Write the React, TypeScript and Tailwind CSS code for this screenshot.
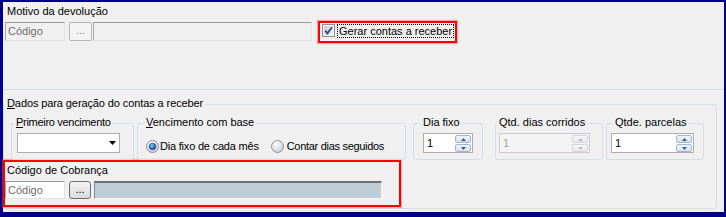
import React from "react";

function GroupBox({
  label,
  className,
  labelClass,
  children,
}: {
  label: React.ReactNode;
  className: string;
  labelClass: string;
  children?: React.ReactNode;
}) {
  return (
    <div className={`rounded-[3px] border border-[#d5dfe5] ${className}`}>
      <div className={`-mt-[8px] h-[13px] w-fit bg-[#f0f0f0] px-[2px] leading-[13px] ${labelClass}`}>
        {label}
      </div>
      {children}
    </div>
  );
}

function Arrow({ up, disabled }: { up?: boolean; disabled?: boolean }) {
  const fill = disabled ? "#b8bcc2" : "#3d5a8a";
  return (
    <div
      className={`flex h-[9px] items-center justify-center rounded-[2px] border ${
        disabled
          ? "border-[#d2d5d9] bg-[linear-gradient(#f7f7f7,#e8e9eb)]"
          : "border-[#a7b5c8] bg-[linear-gradient(#f1f5fa,#d7e1ec)]"
      }`}
    >
      <svg width="5" height="3" viewBox="0 0 5 3">
        <path d={up ? "M0 3 L2.5 0 L5 3 Z" : "M0 0 L2.5 3 L5 0 Z"} fill={fill} />
      </svg>
    </div>
  );
}

function Spin({ className, disabled }: { className: string; disabled?: boolean }) {
  return (
    <div
      className={`flex h-[20px] border ${
        disabled ? "border-[#c9ccd1] bg-[#f4f4f4] text-[#a3a3a3]" : "border-[#abadb3] bg-white text-black"
      } ${className}`}
    >
      <div className="flex-1 pl-[3px] leading-[18px]">1</div>
      <div className="mr-px mt-px flex w-[16px] flex-col gap-px">
        <Arrow up disabled={disabled} />
        <Arrow disabled={disabled} />
      </div>
    </div>
  );
}

function Radio({ checked }: { checked?: boolean }) {
  return (
    <svg width="13" height="13" viewBox="0 0 13 13" className="shrink-0">
      <defs>
        <radialGradient id="rOff" cx="0.35" cy="0.3" r="0.8">
          <stop offset="0" stopColor="#ffffff" />
          <stop offset="1" stopColor="#c6c8cc" />
        </radialGradient>
        <radialGradient id="rOn" cx="0.4" cy="0.35" r="0.7">
          <stop offset="0" stopColor="#9fd3ff" />
          <stop offset="0.6" stopColor="#2b72d0" />
          <stop offset="1" stopColor="#16448f" />
        </radialGradient>
      </defs>
      <circle cx="6.5" cy="6.5" r="6" fill="url(#rOff)" stroke="#8e9196" />
      {checked && <circle cx="6.5" cy="6.5" r="3.3" fill="url(#rOn)" stroke="#1d3f7a" strokeWidth="0.6" />}
    </svg>
  );
}

function CheckBox() {
  return (
    <svg width="13" height="13" viewBox="0 0 13 13" className="shrink-0">
      <defs>
        <linearGradient id="cb" x1="0" y1="0" x2="1" y2="1">
          <stop offset="0" stopColor="#c9ccd2" />
          <stop offset="1" stopColor="#eff1f4" />
        </linearGradient>
      </defs>
      <rect x="0.5" y="0.5" width="12" height="12" fill="#f5f5f5" stroke="#8e8f8f" />
      <rect x="2" y="2" width="9" height="9" fill="url(#cb)" />
      <path d="M3.2 6.6 L5.4 9.4 L10 3.2" fill="none" stroke="#2d4c9c" strokeWidth="1.8" />
    </svg>
  );
}

const inset = "border border-t-[#9a9a9a] border-l-[#a8a8a8] border-r-[#e3e3e3] border-b-[#e3e3e3]";

export default function App() {
  return (
    <div className="h-[217px] w-[726px] bg-[#000088] pb-[5px] pl-[3px] pr-[2px] pt-[2px] font-['Liberation_Sans',Arial,sans-serif] text-[11px] text-black">
      <div className="h-[210px] w-[721px] bg-[#f0f0f0]">
        {/* Motivo da devolução */}
        <div className="h-[87px] pt-[3px]">
          <div className="h-[13px] pl-[4px] leading-[13px]">Motivo da devolução</div>
          <div className="mt-[4px] flex h-[19px] items-start pl-[2px]">
            <div className={`h-[19px] w-[60px] bg-[#f0f0f0] pl-[2px] leading-[17px] text-[#6d6d6d] ${inset}`}>Código</div>
            <div className="ml-[4px] flex h-[19px] w-[23px] items-center justify-center rounded-[2px] border border-[#b5b5b5] bg-[#f4f4f4] pb-[2px] text-[#8a8a8a]">
              ...
            </div>
            <div className={`ml-[1px] h-[19px] w-[219px] bg-[#f0f0f0] ${inset}`} />
            <div className="-mt-[1px] ml-[6px] flex h-[22px] w-[139px] items-start border-2 border-[#ff0000] pl-[2px] pt-px shadow-[0_0_1px_1px_rgba(255,80,80,0.45)]">
              <CheckBox />
              <span className="ml-[2px] h-[14px] border border-dotted border-black px-px leading-[12px]">
                Gerar contas a receber
              </span>
            </div>
          </div>
        </div>
        <div className="h-px bg-[#d5dde4]" />

        {/* Dados para geração do contas a receber */}
        <GroupBox
          className="mt-[14px] h-[105px] w-[714px]"
          labelClass="ml-[1px] tracking-[-0.1px]"
          label={
            <>
              <span className="underline">D</span>ados para geração do contas a receber
            </>
          }
        >
          <div className="mt-[13px] flex items-start">
            <GroupBox
              className="ml-[7px] h-[37px] w-[123px]"
              labelClass="ml-[2px] tracking-[-0.3px]"
              label={
                <>
                  <span className="underline">P</span>rimeiro vencimento
                </>
              }
            >
              <div className="ml-[5px] mt-[4px] flex h-[20px] w-[103px] items-center justify-end border border-[#abadb3] bg-white pr-[3px]">
                <svg width="7" height="4" viewBox="0 0 7 4">
                  <path d="M0 0 L7 0 L3.5 4 Z" fill="#000" />
                </svg>
              </div>
            </GroupBox>

            <GroupBox
              className="ml-[3px] h-[37px] w-[269px]"
              labelClass="ml-[6px]"
              label={
                <>
                  <span className="underline">V</span>encimento com base
                </>
              }
            >
              <div className="ml-[8px] mt-[11px] flex h-[13px] items-center">
                <Radio checked />
                <span className="ml-[1px] leading-[13px] tracking-[-0.2px]">Dia fixo de cada mês</span>
                <div className="ml-[12px]">
                  <Radio />
                </div>
                <span className="ml-[3px] leading-[13px] tracking-[-0.3px]">Contar dias seguidos</span>
              </div>
            </GroupBox>

            <GroupBox className="ml-[7px] h-[37px] w-[70px]" labelClass="ml-[7px]" label="Dia fixo">
              <Spin className="ml-[9px] mt-[4px] w-[50px]" />
            </GroupBox>

            <GroupBox className="ml-[12px] h-[37px] w-[108px]" labelClass="ml-[1px]" label="Qtd. dias corridos">
              <Spin className="ml-[3px] mt-[4px] w-[91px]" disabled />
            </GroupBox>

            <GroupBox className="ml-[3px] h-[37px] w-[98px]" labelClass="ml-[6px]" label="Qtde. parcelas">
              <Spin className="ml-[4px] mt-[4px] w-[83px]" />
            </GroupBox>
          </div>

          {/* Código de Cobrança */}
          <div className="-ml-[1px] h-[47px] w-[398px] border-2 border-[#ff0000] pl-[2px] shadow-[0_0_1px_1px_rgba(255,80,80,0.45)]">
            <div className="mt-[2px] h-[13px] leading-[13px]">Código de Cobrança</div>
            <div className="-ml-[2px] mt-[4px] flex h-[18px] items-start">
              <div className={`h-[18px] w-[60px] bg-white pl-[2px] leading-[16px] text-[#6d6d6d] ${inset}`}>Código</div>
              <div className="ml-[4px] flex h-[18px] w-[22px] items-center justify-center rounded-[3px] border border-[#707070] bg-[linear-gradient(#f2f2f2,#dadada)] pb-[2px]">
                ...
              </div>
              <div className="ml-[3px] h-[18px] w-[288px] border border-t-2 border-t-[#6f6f6f] border-l-[#8a8a8a] border-r-[#f5f5f5] border-b-[#f5f5f5] bg-[#bfcdd9]" />
            </div>
          </div>
        </GroupBox>
      </div>
    </div>
  );
}
